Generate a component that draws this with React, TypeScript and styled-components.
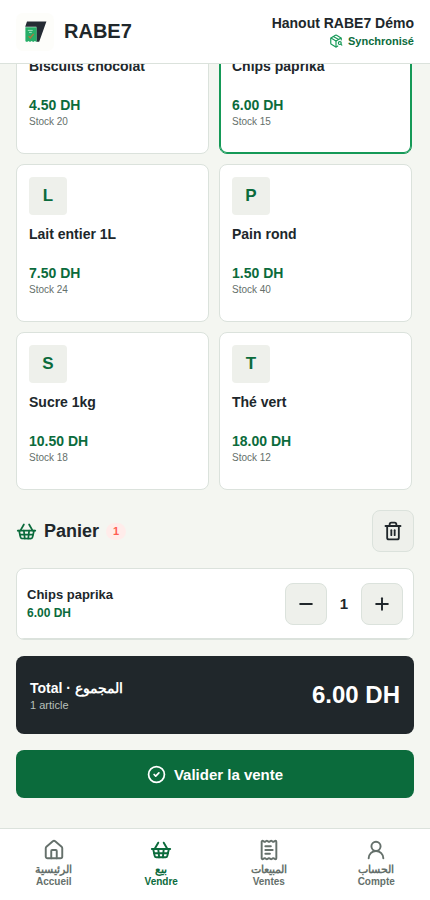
import React from "react";
import styled, { createGlobalStyle, css } from "styled-components";
import {
  CircleCheck,
  House,
  Minus,
  PackageSearch,
  Plus,
  ReceiptText,
  ShoppingBasket,
  Trash2,
  UserRound,
} from "lucide-react";

const color = {
  ink: "#20272b",
  green: "#0b6b3c",
  accent: "#159957",
  muted: "#65706b",
  line: "#dbe2dc",
  page: "#f4f6f1",
  soft: "#eef0eb",
};

const GlobalStyle = createGlobalStyle`
  * { box-sizing: border-box; }
  body {
    margin: 0;
    overflow: hidden;
    background: ${color.page};
    color: ${color.ink};
    font-family: "Liberation Sans", Arial, sans-serif;
  }
  button { font: inherit; color: inherit; padding: 0; cursor: pointer; }
`;

const Screen = styled.div`
  display: flex;
  flex-direction: column;
  height: 900px;
`;

const Header = styled.header`
  display: flex;
  flex: none;
  align-items: center;
  justify-content: space-between;
  height: 64px;
  padding: 0 16px;
  background: #fff;
  border-bottom: 1px solid ${color.line};
`;

const Brand = styled.div`
  display: flex;
  align-items: center;
  gap: 10px;
  font-size: 20px;
  font-weight: 700;
`;

const Logo = styled.svg`
  display: block;
  width: 38px;
  height: 38px;
`;

const Shop = styled.div`
  display: flex;
  flex-direction: column;
  align-items: flex-end;
  gap: 3px;
`;

const ShopName = styled.strong`
  font-size: 14px;
  line-height: 16px;
`;

const SyncState = styled.span`
  display: flex;
  align-items: center;
  gap: 5px;
  color: ${color.green};
  font-size: 11px;
  font-weight: 700;
  line-height: 14px;
  svg { color: ${color.accent}; }
`;

const Viewport = styled.main`
  flex: 1;
  min-height: 0;
  overflow: hidden;
`;

const Content = styled.div`
  margin-top: -68px;
  padding: 0 16px;
`;

const ProductGrid = styled.div`
  display: grid;
  grid-template-columns: repeat(2, 193px);
  grid-auto-rows: 158px;
  gap: 10px;
`;

const ProductCard = styled.button<{ $selected?: boolean }>`
  display: flex;
  flex-direction: column;
  align-items: flex-start;
  padding: 12px;
  text-align: left;
  background: #fff;
  border: 1px solid ${color.line};
  border-radius: 8px;
  ${(p) =>
    p.$selected &&
    css`
      border-color: ${color.accent};
      box-shadow: inset 0 0 0 1px ${color.accent};
    `}
`;

const Initial = styled.span`
  display: grid;
  place-items: center;
  width: 38px;
  height: 38px;
  border-radius: 4px;
  background: ${color.soft};
  color: ${color.green};
  font-size: 17px;
  font-weight: 700;
`;

const ProductName = styled.strong`
  min-height: 38px;
  margin-top: 10px;
  font-size: 14px;
  line-height: 18px;
`;

const Price = styled.strong`
  margin-top: 2px;
  color: ${color.green};
  font-size: 14px;
  line-height: 16px;
`;

const Stock = styled.span`
  margin-top: 3px;
  color: ${color.muted};
  font-size: 10px;
  line-height: 12px;
`;

const CartHeader = styled.div`
  display: flex;
  align-items: center;
  justify-content: space-between;
  margin: 20px 0 16px;
`;

const CartTitle = styled.h2`
  display: flex;
  align-items: center;
  gap: 7px;
  margin: 0;
  font-size: 18px;
  line-height: 22px;
  svg { color: ${color.green}; }
`;

const Count = styled.span`
  width: 20px;
  height: 17px;
  border-radius: 10px;
  background: #ffecea;
  color: #ff5d52;
  font-size: 11px;
  line-height: 17px;
  text-align: center;
`;

const SquareButton = styled.button`
  display: grid;
  place-items: center;
  width: 42px;
  height: 42px;
  border: 1px solid ${color.line};
  border-radius: 8px;
  background: ${color.soft};
`;

const CartList = styled.div`
  border: 1px solid ${color.line};
  border-radius: 8px;
  background: #fff;
  overflow: hidden;
`;

const CartLine = styled.div`
  display: flex;
  align-items: center;
  justify-content: space-between;
  height: 70px;
  padding: 0 10px;
  border-bottom: 1px solid ${color.line};
`;

const LineText = styled.div`
  display: flex;
  flex-direction: column;
  gap: 4px;
`;

const LineName = styled.strong`
  font-size: 13px;
  line-height: 15px;
`;

const LinePrice = styled.strong`
  color: ${color.green};
  font-size: 12px;
  line-height: 14px;
`;

const Stepper = styled.div`
  display: grid;
  grid-template-columns: 42px 34px 42px;
  align-items: center;
  text-align: center;
  font-size: 15px;
  font-weight: 700;
`;

const Total = styled.section`
  display: flex;
  align-items: center;
  justify-content: space-between;
  height: 78px;
  margin-top: 16px;
  padding: 0 14px;
  border-radius: 8px;
  background: ${color.ink};
  color: #fff;
`;

const TotalText = styled.div`
  display: flex;
  flex-direction: column;
  gap: 2px;
  padding-top: 2px;
`;

const TotalLabel = styled.strong`
  font-size: 14px;
  line-height: 17px;
`;

const TotalNote = styled.span`
  color: #b9c0bc;
  font-size: 11px;
  line-height: 13px;
`;

const TotalAmount = styled.strong`
  font-size: 24px;
`;

const Submit = styled.button`
  display: flex;
  align-items: center;
  justify-content: center;
  gap: 8px;
  width: 100%;
  height: 48px;
  margin-top: 16px;
  border: 0;
  border-radius: 8px;
  background: ${color.green};
  && { color: #fff; font-size: 15px; font-weight: 700; }
`;

const Nav = styled.nav`
  display: grid;
  flex: none;
  grid-template-columns: repeat(4, 1fr);
  height: 72px;
  border-top: 1px solid ${color.line};
  background: #fff;
`;

const NavItem = styled.a<{ $active?: boolean }>`
  display: flex;
  flex-direction: column;
  align-items: center;
  padding-top: 10px;
  color: ${(p) => (p.$active ? color.green : color.muted)};
  font-size: 10px;
  font-weight: 700;
  line-height: 12px;
`;

const NavArabic = styled.span`
  margin: 2px 0 1px;
  font-size: 11px;
  line-height: 12px;
`;

const products = [
  { name: "Biscuits chocolat", price: "4.50", stock: 20 },
  { name: "Chips paprika", price: "6.00", stock: 15, selected: true },
  { name: "Lait entier 1L", price: "7.50", stock: 24 },
  { name: "Pain rond", price: "1.50", stock: 40 },
  { name: "Sucre 1kg", price: "10.50", stock: 18 },
  { name: "Thé vert", price: "18.00", stock: 12 },
];

const tabs = [
  { ar: "الرئيسية", fr: "Accueil", Icon: House },
  { ar: "بيع", fr: "Vendre", Icon: ShoppingBasket, active: true },
  { ar: "المبيعات", fr: "Ventes", Icon: ReceiptText },
  { ar: "الحساب", fr: "Compte", Icon: UserRound },
];

export default function App() {
  return (
    <>
      <GlobalStyle />
      <Screen>
        <Header>
          <Brand>
            <Logo viewBox="0 0 38 38">
              <rect width="38" height="38" rx="7" fill="#fdfdfa" />
              <path d="M11 8.5H30.4L23.2 28.8H20.4V13.8H9.2Z" fill="#252b34" />
              <path
                d="M9.4 14.2H20.6V29L18.9 28L17.2 29L15.6 28L14 29L12.5 28L11 29L9.4 28.2Z"
                fill="#27ae68"
              />
              <path d="M11.8 17.4H16.7M13 19.4H15.8" stroke="#c5ecd4" strokeWidth="0.8" />
              <path d="M12.6 23.2L14.3 25L17.6 20.9" fill="none" stroke="#b9743a" strokeWidth="1.2" />
            </Logo>
            RABE7
          </Brand>
          <Shop>
            <ShopName>Hanout RABE7 Démo</ShopName>
            <SyncState>
              <PackageSearch size={14} />
              Synchronisé
            </SyncState>
          </Shop>
        </Header>
        <Viewport>
          <Content>
            <ProductGrid>
              {products.map((p) => (
                <ProductCard key={p.name} $selected={p.selected}>
                  <Initial>{p.name[0]}</Initial>
                  <ProductName>{p.name}</ProductName>
                  <Price>{p.price} DH</Price>
                  <Stock>Stock {p.stock}</Stock>
                </ProductCard>
              ))}
            </ProductGrid>
            <CartHeader>
              <CartTitle>
                <ShoppingBasket size={21} />
                Panier
                <Count>1</Count>
              </CartTitle>
              <SquareButton aria-label="Vider le panier">
                <Trash2 size={20} strokeWidth={2.2} />
              </SquareButton>
            </CartHeader>
            <CartList>
              <CartLine>
                <LineText>
                  <LineName>Chips paprika</LineName>
                  <LinePrice>6.00 DH</LinePrice>
                </LineText>
                <Stepper>
                  <SquareButton aria-label="Retirer">
                    <Minus size={20} strokeWidth={2.3} />
                  </SquareButton>
                  <span>1</span>
                  <SquareButton aria-label="Ajouter">
                    <Plus size={20} strokeWidth={2.3} />
                  </SquareButton>
                </Stepper>
              </CartLine>
            </CartList>
            <Total>
              <TotalText>
                <TotalLabel>Total · المجموع</TotalLabel>
                <TotalNote>1 article</TotalNote>
              </TotalText>
              <TotalAmount>6.00 DH</TotalAmount>
            </Total>
            <Submit>
              <CircleCheck size={19} strokeWidth={2.2} />
              Valider la vente
            </Submit>
          </Content>
        </Viewport>
        <Nav>
          {tabs.map(({ ar, fr, Icon, active }) => (
            <NavItem key={fr} $active={active}>
              <Icon size={22} strokeWidth={2.1} />
              <NavArabic>{ar}</NavArabic>
              <span>{fr}</span>
            </NavItem>
          ))}
        </Nav>
      </Screen>
    </>
  );
}
